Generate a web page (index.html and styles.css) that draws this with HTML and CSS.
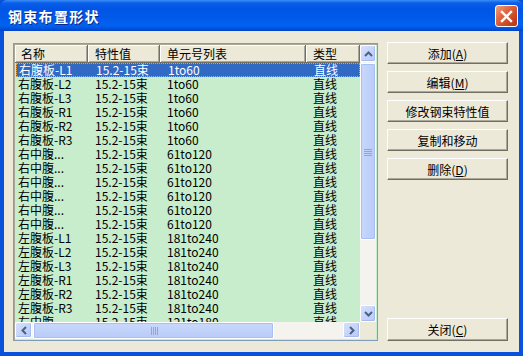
FILE: index.html
```html
<!DOCTYPE html>
<html lang="zh-CN">
  <head>
    <meta charset="UTF-8" />
    <title>钢束布置形状</title>
    <link rel="stylesheet" href="styles.css">
  </head>
  <body>
    <div class="window">
      <div class="titlebar">
        <span class="title">钢束布置形状</span>
        <button class="close-x">
          <svg width="13" height="13" viewBox="0 0 13 13">
            <path d="M2 2 L11 11 M11 2 L2 11" stroke="#fff" stroke-width="2.4" stroke-linecap="square" />
          </svg>
        </button>
      </div>
      <div class="client">
        <div class="list">
          <div class="viewport">
            <div class="row head">
              <span>名称</span><span>特性值</span><span>单元号列表</span><span>类型</span>
            </div>
            <div class="row sel"><span>右腹板-L1</span><span>15.2-15束</span><span>1to60</span><span>直线</span></div>
            <div class="row"><span>右腹板-L2</span><span>15.2-15束</span><span>1to60</span><span>直线</span></div>
            <div class="row"><span>右腹板-L3</span><span>15.2-15束</span><span>1to60</span><span>直线</span></div>
            <div class="row"><span>右腹板-R1</span><span>15.2-15束</span><span>1to60</span><span>直线</span></div>
            <div class="row"><span>右腹板-R2</span><span>15.2-15束</span><span>1to60</span><span>直线</span></div>
            <div class="row"><span>右腹板-R3</span><span>15.2-15束</span><span>1to60</span><span>直线</span></div>
            <div class="row"><span>右中腹...</span><span>15.2-15束</span><span>61to120</span><span>直线</span></div>
            <div class="row"><span>右中腹...</span><span>15.2-15束</span><span>61to120</span><span>直线</span></div>
            <div class="row"><span>右中腹...</span><span>15.2-15束</span><span>61to120</span><span>直线</span></div>
            <div class="row"><span>右中腹...</span><span>15.2-15束</span><span>61to120</span><span>直线</span></div>
            <div class="row"><span>右中腹...</span><span>15.2-15束</span><span>61to120</span><span>直线</span></div>
            <div class="row"><span>右中腹...</span><span>15.2-15束</span><span>61to120</span><span>直线</span></div>
            <div class="row"><span>左腹板-L1</span><span>15.2-15束</span><span>181to240</span><span>直线</span></div>
            <div class="row"><span>左腹板-L2</span><span>15.2-15束</span><span>181to240</span><span>直线</span></div>
            <div class="row"><span>左腹板-L3</span><span>15.2-15束</span><span>181to240</span><span>直线</span></div>
            <div class="row"><span>左腹板-R1</span><span>15.2-15束</span><span>181to240</span><span>直线</span></div>
            <div class="row"><span>左腹板-R2</span><span>15.2-15束</span><span>181to240</span><span>直线</span></div>
            <div class="row"><span>左腹板-R3</span><span>15.2-15束</span><span>181to240</span><span>直线</span></div>
            <div class="row"><span>左中腹...</span><span>15.2-15束</span><span>121to180</span><span>直线</span></div>
          </div>
          <div class="vscroll">
            <div class="sb-btn">
              <svg width="9" height="6" viewBox="0 0 9 6"><path d="M1 5 L4.5 1.5 L8 5" fill="none" stroke="#4d6185" stroke-width="2" /></svg>
            </div>
            <div class="thumb v">
              <svg width="8" height="8" viewBox="0 0 8 8"><path d="M0 1.5 H8 M0 3.5 H8 M0 5.5 H8 M0 7.5 H8" stroke="#8aa6e8" stroke-width="1" /></svg>
            </div>
            <div class="track"></div>
            <div class="sb-btn">
              <svg width="9" height="6" viewBox="0 0 9 6"><path d="M1 1 L4.5 4.5 L8 1" fill="none" stroke="#4d6185" stroke-width="2" /></svg>
            </div>
          </div>
          <div class="hscroll">
            <div class="sb-btn">
              <svg width="6" height="9" viewBox="0 0 6 9"><path d="M5 1 L1.5 4.5 L5 8" fill="none" stroke="#4d6185" stroke-width="2" /></svg>
            </div>
            <div class="thumb h">
              <svg width="8" height="8" viewBox="0 0 8 8"><path d="M1.5 0 V8 M3.5 0 V8 M5.5 0 V8 M7.5 0 V8" stroke="#8aa6e8" stroke-width="1" /></svg>
            </div>
            <div class="track"></div>
            <div class="sb-btn">
              <svg width="6" height="9" viewBox="0 0 6 9"><path d="M1 1 L4.5 4.5 L1 8" fill="none" stroke="#4d6185" stroke-width="2" /></svg>
            </div>
          </div>
          <div class="corner"></div>
        </div>
        <div class="actions">
          <button class="btn">添加(<u>A</u>)</button>
          <button class="btn">编辑(<u>M</u>)</button>
          <button class="btn">修改钢束特性值</button>
          <button class="btn">复制和移动</button>
          <button class="btn">删除(<u>D</u>)</button>
          <button class="btn close">关闭(<u>C</u>)</button>
        </div>
      </div>
    </div>
  </body>
</html>
```

FILE: styles.css
```css
html,
body {
  margin: 0;
  background: #0a4fd8;
}
.window {
  width: 523px;
  height: 356px;
  display: flex;
  flex-direction: column;
  border-radius: 7px 7px 0 0;
  overflow: hidden;
  font-family: "Noto Sans CJK SC", "Noto Sans", sans-serif;
  font-size: 12px;
}
.titlebar {
  height: 31px;
  flex: none;
  display: flex;
  align-items: center;
  justify-content: space-between;
  padding: 0 5px 0 8px;
  box-sizing: border-box;
  background: linear-gradient(#3c8ef6 0, #0a5ee9 3px, #0055e5 9px, #0159ea 18px, #0163f0 25px, #0056e3 28px, #0043c6 31px);
}
.title {
  color: #fff;
  font-weight: bold;
  font-size: 14px;
  letter-spacing: 1.3px;
  text-shadow: 1px 1px #0a2a8a;
  margin-top: 1px;
}
.close-x {
  width: 23px;
  height: 22px;
  margin-top: 1px;
  padding: 0;
  display: flex;
  align-items: center;
  justify-content: center;
  border: 1px solid #fff;
  border-radius: 3px;
  background: linear-gradient(135deg, #f0a080 0, #e06a45 35%, #c8431f 75%, #b8381a 100%);
}
.client {
  flex: 1;
  display: flex;
  gap: 9px;
  padding: 12px 11px 11px 9px;
  background: #ece9d8;
  border: 4px solid #0a52dc;
  border-top: 0;
}
.list {
  width: 365px;
  height: 298px;
  box-sizing: border-box;
  border: 1px solid #7f9db9;
  box-shadow: inset 1px 1px #aca899;
  padding: 1px 0 0 1px;
  display: grid;
  grid-template-columns: 345px 16px;
  grid-template-rows: 277px 17px;
  background: #c7edcc;
}
.viewport {
  overflow: hidden;
}
.row {
  display: grid;
  grid-template-columns: 73px 72px 146px 54px;
  height: 14px;
  line-height: 14px;
  white-space: nowrap;
  color: #000;
}
.row span {
  padding-left: 7px;
}
.row span:first-child {
  padding-left: 3px;
}
.row.head {
  height: 18px;
  line-height: 17px;
  background: #ece9d8;
}
.row.head span {
  box-sizing: border-box;
  border-right: 1px solid #716f64;
  border-bottom: 1px solid #716f64;
  box-shadow: inset 1px 1px #fff, inset -1px -1px #aca899;
  padding-left: 7px;
}
.row.head span:first-child {
  padding-left: 6px;
}
.row.sel {
  background: #316ac5;
  color: #fff;
  outline: 1px dotted #e8a33d;
  outline-offset: -1px;
  margin-left: 1px;
}
.vscroll,
.hscroll {
  display: flex;
  background: #f4f3ee;
}
.vscroll {
  flex-direction: column;
}
.sb-btn {
  flex: none;
  width: 16px;
  height: 17px;
  box-sizing: border-box;
  display: flex;
  align-items: center;
  justify-content: center;
  border: 1px solid #fff;
  border-radius: 2px;
  background: linear-gradient(135deg, #d5e0fd, #b6c9f7);
  box-shadow: inset -1px -1px #a5bbf0;
}
.hscroll .sb-btn {
  width: 17px;
  height: 16px;
}
.thumb {
  box-sizing: border-box;
  display: flex;
  align-items: center;
  justify-content: center;
  border: 1px solid #fff;
  border-radius: 2px;
  box-shadow: inset 0 0 0 1px #a9bef2;
}
.thumb.v {
  height: 177px;
  margin-top: 1px;
  background: linear-gradient(90deg, #c9d8fc, #b8cbf8);
}
.thumb.h {
  width: 241px;
  margin-left: 1px;
  background: linear-gradient(#c9d8fc, #b8cbf8);
}
.track {
  flex: 1;
}
.corner {
  background: #ece9d8;
}
.actions {
  width: 121px;
  margin-top: -1px;
  display: flex;
  flex-direction: column;
  gap: 7px;
}
.btn {
  height: 22px;
  padding: 0;
  font-family: "Noto Sans CJK SC", "Noto Sans", sans-serif;
  font-size: 12px;
  color: #000;
  background: #ece9d8;
  border: 1px solid;
  border-color: #fff #716f64 #716f64 #fff;
  box-shadow: inset -1px -1px #aca899;
}
.btn.close {
  margin-top: auto;
  height: 23px;
}
```
